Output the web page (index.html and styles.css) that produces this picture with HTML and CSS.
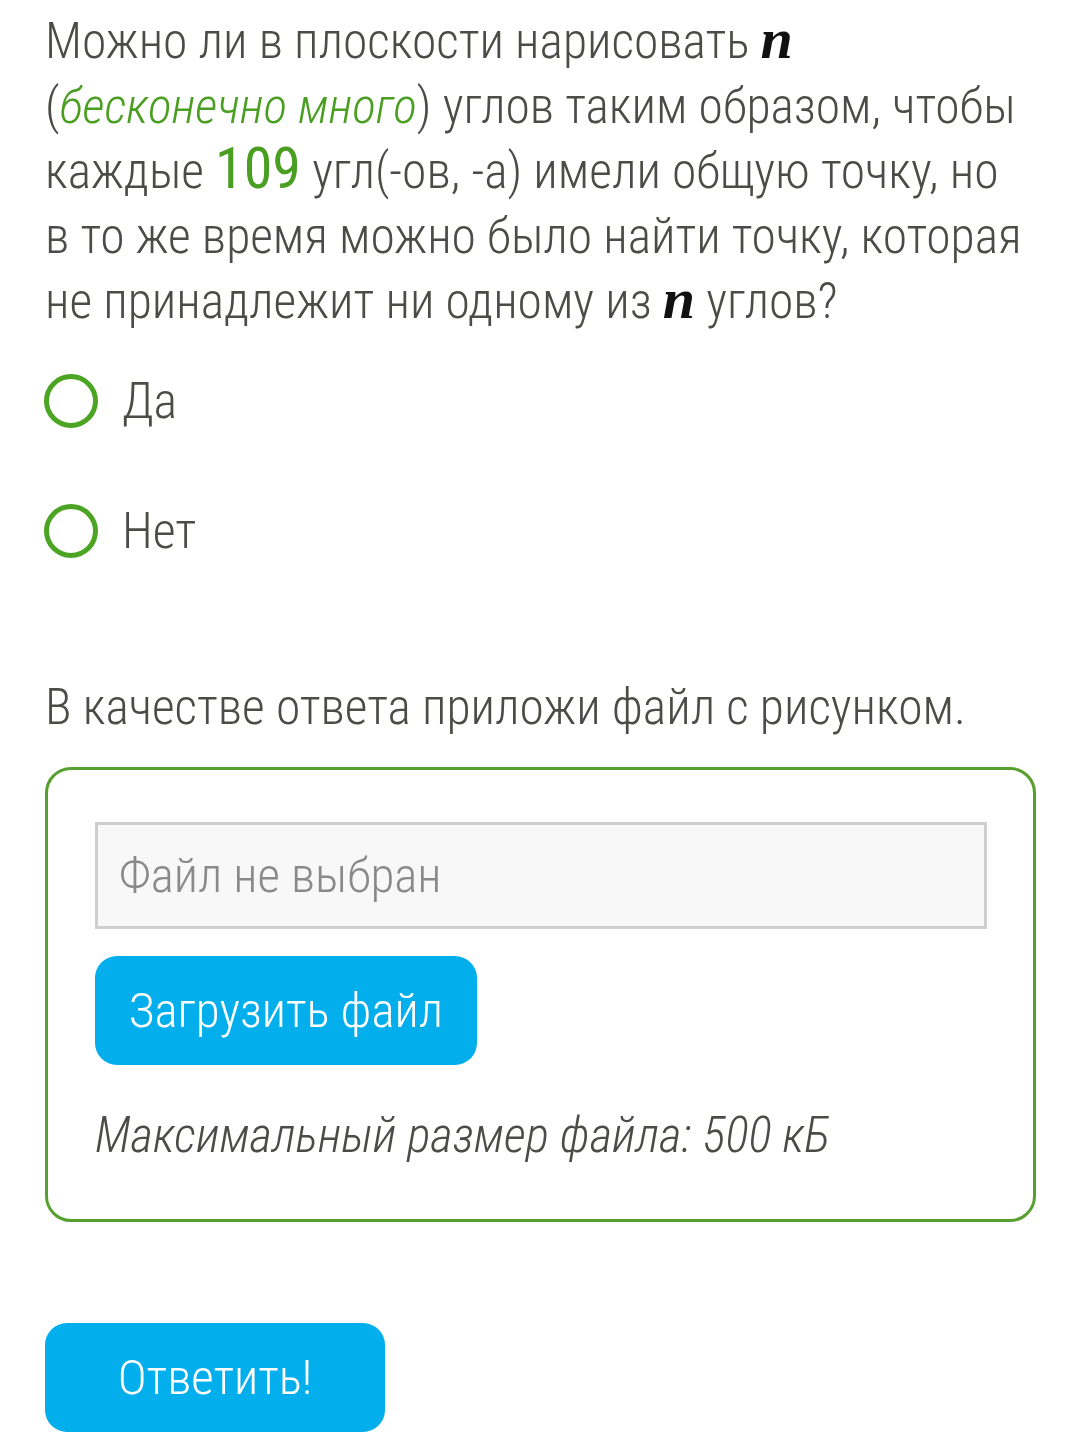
FILE: index.html
```html
<!DOCTYPE html>
<html lang="ru">
<head>
  <meta charset="UTF-8" />
  <title>Задача</title>
  <link rel="stylesheet" href="styles.css">
</head>
<body>
  <div class="task">
    <p class="question">
      Можно ли в плоскости нарисовать <span class="math">n</span><br>
      (<em class="hint">бесконечно много</em>) углов таким образом, чтобы<br>
      каждые <span class="num">109</span> угл(-ов, -а) имели общую точку, но<br>
      в то же время можно было найти точку, которая<br>
      не принадлежит ни одному из <span class="math">n</span> углов?
    </p>

    <ul class="options">
      <li><span class="radio"></span>Да</li>
      <li><span class="radio"></span>Нет</li>
    </ul>

    <p class="attach-note">В качестве ответа приложи файл с рисунком.</p>

    <div class="upload">
      <div class="file-field">Файл не выбран</div>
      <button class="btn">Загрузить файл</button>
      <p class="limit">Максимальный размер файла: 500 кБ</p>
    </div>

    <button class="btn submit">Ответить!</button>
  </div>
</body>
</html>
```

FILE: styles.css
```css
body {
  margin: 0;
  background: #fff;
  color: #4b4b47;
  font-family: 'Roboto', 'Noto Sans', sans-serif;
  font-weight: 300;
  font-stretch: 84%;
}

.task {
  padding: 9px 44px 0 45px;
}

.question {
  margin: 0;
  font-size: 49.5px;
  line-height: 65px;
  white-space: nowrap;
}

.math {
  font-family: 'Liberation Serif', 'DejaVu Serif', serif;
  font-style: italic;
  font-weight: bold;
  color: #111;
  font-size: 58px;
  line-height: 1;
}

.hint {
  color: #4a9e22;
}

.num {
  color: #4a9e22;
  font-size: 58px;
  font-weight: 400;
  line-height: 1;
}

.options {
  list-style: none;
  margin: 27px 0 0;
  padding: 0;
}

.options li {
  display: flex;
  align-items: center;
  gap: 24px;
  height: 80px;
  margin-bottom: 50px;
  font-size: 50px;
}

.radio {
  width: 44px;
  height: 44px;
  margin-left: -1px;
  border: 5px solid #4ba522;
  border-radius: 50%;
}

.attach-note {
  margin: 104px 0 0;
  font-size: 49.5px;
  line-height: 65px;
  white-space: nowrap;
}

.upload {
  margin-top: 27px;
  border: 3px solid #57a02f;
  border-radius: 26px;
  padding: 52px 46px 53px 47px;
}

.file-field {
  background: #f8f8f8;
  border: 3px solid #cfcfcf;
  height: 101px;
  display: flex;
  align-items: center;
  padding-left: 21px;
  font-size: 49px;
  color: #8a8a8a;
}

.btn {
  display: block;
  border: none;
  border-radius: 22px;
  background: #03aeec;
  color: #fff;
  font: inherit;
  font-size: 49px;
  width: 382px;
  height: 109px;
  padding: 0;
  margin-top: 27px;
}

.limit {
  margin: 41px 0 0;
  font-style: italic;
  font-size: 49px;
  line-height: 60px;
}

.submit {
  margin-top: 101px;
  width: 340px;
}
```
